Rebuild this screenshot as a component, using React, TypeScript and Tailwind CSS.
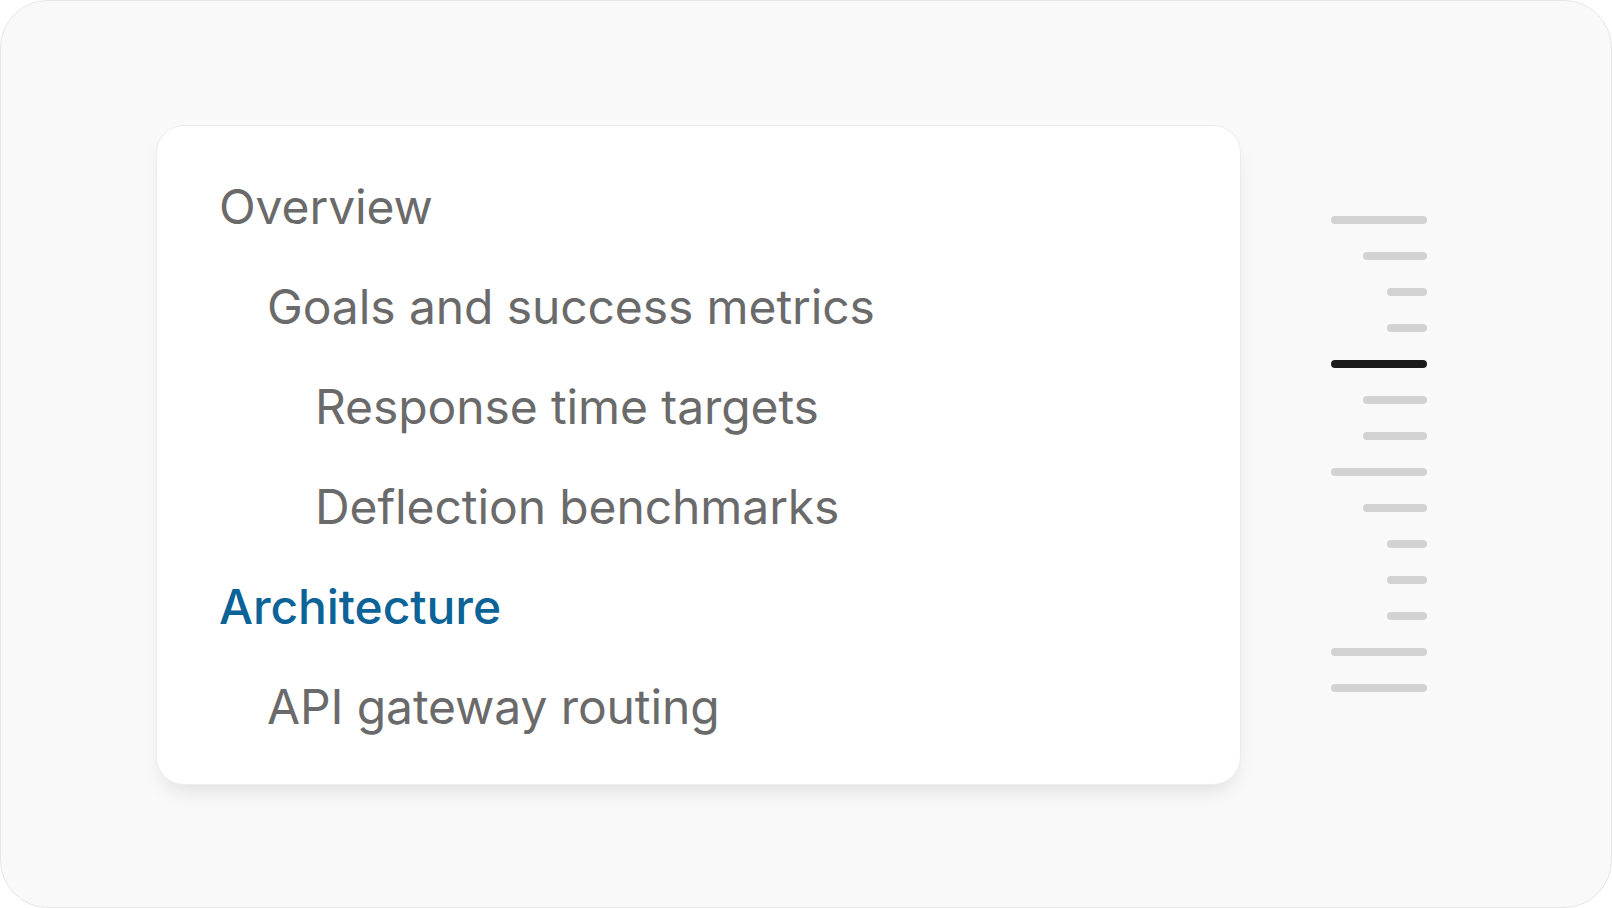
const items = [
    { label: "Overview", level: 0 },
    { label: "Goals and success metrics", level: 1 },
    { label: "Response time targets", level: 2 },
    { label: "Deflection benchmarks", level: 2 },
    { label: "Architecture", level: 0, active: true },
    { label: "API gateway routing", level: 1 },
];

// minimap ticks: l = long, m = medium, s = short
const ticks = ["l", "m", "s", "s", "l", "m", "m", "l", "m", "s", "s", "s", "l", "l"];
const activeTick = 4;

const indent: Record<number, string> = {
    0: "pl-0",
    1: "pl-[48px]",
    2: "pl-[96px]",
};

const tickWidth: Record<string, string> = {
    l: "w-[96px]",
    m: "w-[64px]",
    s: "w-[40px]",
};

export default function App() {
    return (
        <div
            className="h-[908px] w-[1612px] bg-white"
            style={{ fontFamily: "Inter, 'Noto Sans', sans-serif" }}
        >
            <div className="h-full w-full rounded-[48px] border border-[#e6e6e6] bg-[#f9f9f9] flex items-center pl-[155px]">
                <div className="w-[1085px] h-[660px] mt-[2px] rounded-[28px] border border-[#ececec] bg-white shadow-[0_12px_20px_-6px_rgba(0,0,0,0.10)] pl-[62px] pt-[31px]">
                    {items.map((item) => (
                        <div
                            key={item.label}
                            className={`h-[100px] flex items-center text-[48px] tracking-[-0.1px] ${indent[item.level]} ${
                                item.active ? "text-[#0b6397] font-medium" : "text-[#6a6a6a]"
                            }`}
                        >
                            {item.label}
                        </div>
                    ))}
                </div>

                <div className="ml-[90px] flex flex-col items-end gap-[28px]">
                    {ticks.map((t, i) => (
                        <div
                            key={i}
                            className={`h-[8px] rounded-full ${tickWidth[t]} ${
                                i === activeTick ? "bg-[#1a1a1a]" : "bg-[#d2d2d2]"
                            }`}
                        />
                    ))}
                </div>
            </div>
        </div>
    );
}
